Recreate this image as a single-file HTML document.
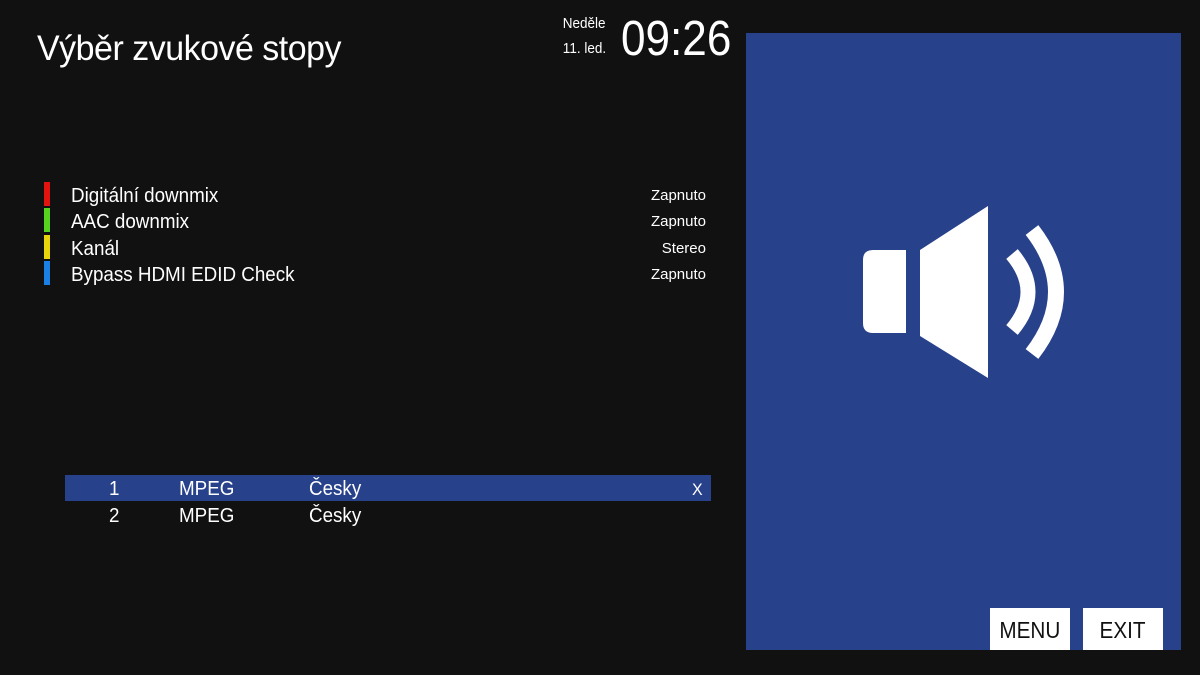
<!DOCTYPE html>
<html><head><meta charset="utf-8"><style>
body{margin:0;width:1200px;height:675px;background:#111111;overflow:hidden;position:relative;font-family:"Liberation Sans",sans-serif;color:#fff}
.a{position:absolute;white-space:nowrap}
.n{transform-origin:0 0;transform:scaleX(0.94)}
.r{transform-origin:100% 0;transform:scaleX(0.9)}
.bar{position:absolute;left:44px;width:6px;height:24px}
.item{position:absolute;left:71px;font-size:20px}
.val{position:absolute;right:494px;font-size:15px}
</style></head><body>
<div class="a n" style="left:37px;top:29px;font-size:35px;font-weight:300;letter-spacing:-0.5px;transform:scaleX(0.97)">Výběr zvukové stopy</div>
<div class="a r" style="right:594px;top:15px;font-size:15px">Neděle</div>
<div class="a r" style="right:594px;top:40px;font-size:15px">11. led.</div>
<div class="a n" style="left:621px;top:11px;font-size:49px;font-weight:300;transform:scaleX(0.9)">09:26</div>

<div class="bar" style="top:182px;background:#e3140f"></div>
<div class="bar" style="top:208px;background:#57d21d"></div>
<div class="bar" style="top:235px;background:#e8d40d"></div>
<div class="bar" style="top:261px;background:#1a80e5"></div>
<div class="a item n" style="top:185px">Digitální downmix</div>
<div class="a item n" style="top:211px">AAC downmix</div>
<div class="a item n" style="top:238px">Kanál</div>
<div class="a item n" style="top:264px">Bypass HDMI EDID Check</div>
<div class="a val r" style="top:187px;transform:none">Zapnuto</div>
<div class="a val r" style="top:213px;transform:none">Zapnuto</div>
<div class="a val r" style="top:240px;transform:none">Stereo</div>
<div class="a val r" style="top:266px;transform:none">Zapnuto</div>

<div class="a" style="left:65px;top:475px;width:646px;height:26px;background:#27418b"></div>
<div class="a n" style="left:109px;top:478px;font-size:20px">1</div>
<div class="a n" style="left:179px;top:478px;font-size:20px">MPEG</div>
<div class="a n" style="left:309px;top:478px;font-size:20px">Česky</div>
<div class="a n" style="left:692px;top:480px;font-size:17px">X</div>
<div class="a n" style="left:109px;top:505px;font-size:20px">2</div>
<div class="a n" style="left:179px;top:505px;font-size:20px">MPEG</div>
<div class="a n" style="left:309px;top:505px;font-size:20px">Česky</div>

<div class="a" style="left:746px;top:33px;width:435px;height:617px;background:#27418b"></div>
<svg class="a" style="left:0;top:0" width="1200" height="675">
<path d="M873 250H906V333H873Q863 333 863 323V260Q863 250 873 250Z" fill="#fff"/>
<path d="M920 250L988 206V378L920 336Z" fill="#fff"/>
<path d="M1012 254Q1044 292 1012 330" stroke="#fff" stroke-width="15" fill="none"/>
<path d="M1032 230Q1080 292 1032 354" stroke="#fff" stroke-width="16" fill="none"/>
</svg>
<div class="a" style="left:990px;top:608px;width:80px;height:42px;background:#fff;color:#111;font-size:23px;line-height:44px;text-align:center"><span style="display:inline-block;transform:scaleX(0.9)">MENU</span></div>
<div class="a" style="left:1083px;top:608px;width:80px;height:42px;background:#fff;color:#111;font-size:23px;line-height:44px;text-align:center"><span style="display:inline-block;transform:scaleX(0.9)">EXIT</span></div>
</body></html>
